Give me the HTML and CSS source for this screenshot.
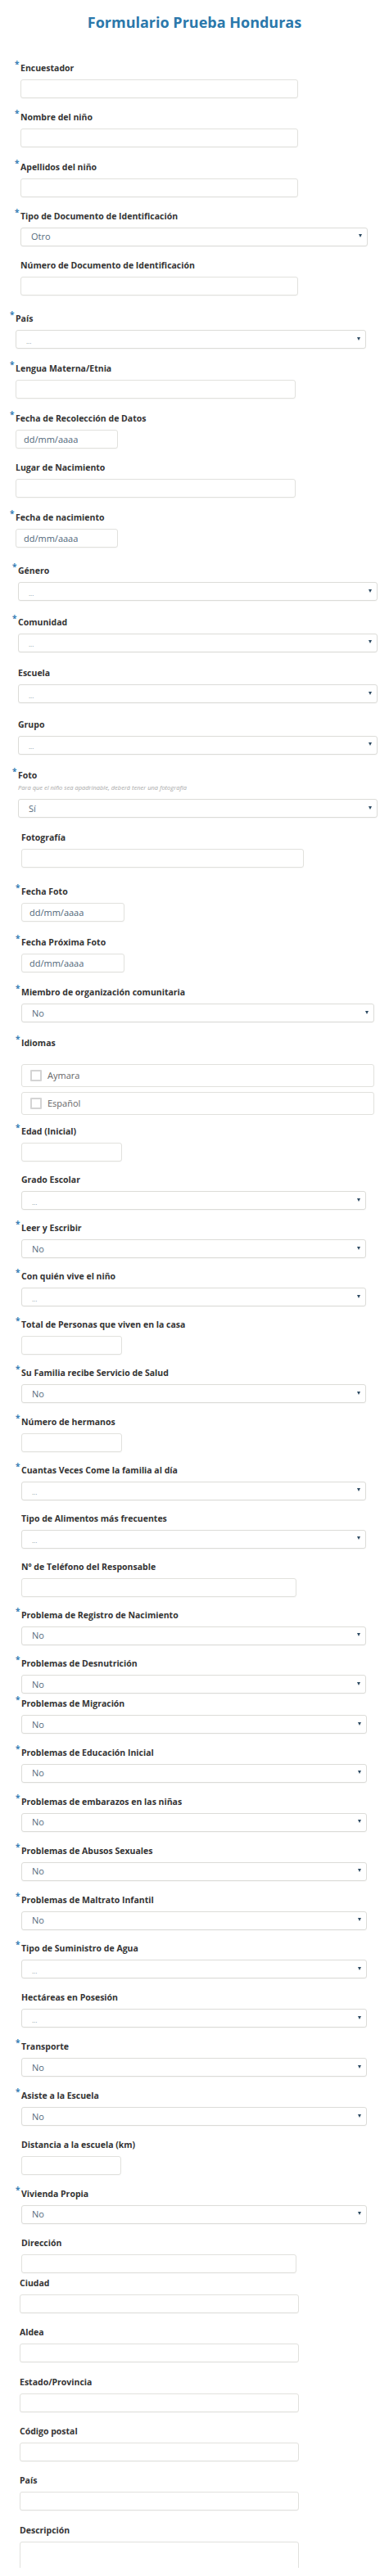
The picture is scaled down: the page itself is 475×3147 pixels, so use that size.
FILE: index.html
```html
<!DOCTYPE html>
<html lang="es">
<head>
<meta charset="utf-8">
<title>Formulario Prueba Honduras</title>
<link rel="stylesheet" href="styles.css">
</head>
<body>
<div class="page">
  <h1 class="title">Formulario Prueba Honduras</h1>

  <section class="sec sec-a">
    <div class="field"><label class="lbl"><span class="req">*</span>Encuestador</label><input class="ctl in" type="text"></div>
    <div class="field"><label class="lbl"><span class="req">*</span>Nombre del niño</label><input class="ctl in" type="text"></div>
    <div class="field"><label class="lbl"><span class="req">*</span>Apellidos del niño</label><input class="ctl in" type="text"></div>
    <div class="field"><label class="lbl"><span class="req">*</span>Tipo de Documento de Identificación</label><div class="ctl sel"><span class="val">Otro</span><span class="arrow"></span></div></div>
    <div class="field"><label class="lbl">Número de Documento de Identificación</label><input class="ctl in" type="text"></div>
  </section>

  <section class="sec sec-b">
    <div class="field"><label class="lbl"><span class="req">*</span>País</label><div class="ctl sel"><span class="dots">...</span><span class="arrow"></span></div></div>
    <div class="field"><label class="lbl"><span class="req">*</span>Lengua Materna/Etnia</label><input class="ctl in" type="text"></div>
    <div class="field"><label class="lbl"><span class="req">*</span>Fecha de Recolección de Datos</label><input class="ctl date" type="text" placeholder="dd/mm/aaaa"></div>
    <div class="field"><label class="lbl">Lugar de Nacimiento</label><input class="ctl in" type="text"></div>
    <div class="field"><label class="lbl"><span class="req">*</span>Fecha de nacimiento</label><input class="ctl date" type="text" placeholder="dd/mm/aaaa"></div>
  </section>

  <section class="sec sec-c">
    <div class="field"><label class="lbl"><span class="req">*</span>Género</label><div class="ctl sel"><span class="dots">...</span><span class="arrow"></span></div></div>
    <div class="field"><label class="lbl"><span class="req">*</span>Comunidad</label><div class="ctl sel"><span class="dots">...</span><span class="arrow"></span></div></div>
    <div class="field"><label class="lbl">Escuela</label><div class="ctl sel"><span class="dots">...</span><span class="arrow"></span></div></div>
    <div class="field"><label class="lbl">Grupo</label><div class="ctl sel"><span class="dots">...</span><span class="arrow"></span></div></div>
    <div class="field"><label class="lbl"><span class="req">*</span>Foto</label><p class="help">Para que el niño sea apadrinable, deberá tener una fotografía</p><div class="ctl sel sel-help"><span class="val">Sí</span><span class="arrow"></span></div></div>
  </section>

  <section class="sec sec-d1">
    <div class="field"><label class="lbl">Fotografía</label><input class="ctl in" type="text"></div>
  </section>

  <section class="sec sec-d2">
    <div class="field"><label class="lbl"><span class="req">*</span>Fecha Foto</label><input class="ctl date" type="text" placeholder="dd/mm/aaaa"></div>
    <div class="field"><label class="lbl"><span class="req">*</span>Fecha Próxima Foto</label><input class="ctl date" type="text" placeholder="dd/mm/aaaa"></div>
    <div class="field"><label class="lbl"><span class="req">*</span>Miembro de organización comunitaria</label><div class="ctl sel"><span class="val">No</span><span class="arrow"></span></div></div>
    <div class="field"><label class="lbl"><span class="req">*</span>Idiomas</label>
      <div class="checks">
        <div class="check-row"><span class="box"></span><span class="check-txt">Aymara</span></div>
        <div class="check-row"><span class="box"></span><span class="check-txt">Español</span></div>
      </div>
    </div>
  </section>

  <section class="sec sec-e">
    <div class="field"><label class="lbl"><span class="req">*</span>Edad (Inicial)</label><input class="ctl sm" type="text"></div>
    <div class="field"><label class="lbl">Grado Escolar</label><div class="ctl sel"><span class="dots">...</span><span class="arrow"></span></div></div>
    <div class="field"><label class="lbl"><span class="req">*</span>Leer y Escribir</label><div class="ctl sel"><span class="val">No</span><span class="arrow"></span></div></div>
    <div class="field"><label class="lbl"><span class="req">*</span>Con quién vive el niño</label><div class="ctl sel"><span class="dots">...</span><span class="arrow"></span></div></div>
    <div class="field"><label class="lbl"><span class="req">*</span>Total de Personas que viven en la casa</label><input class="ctl sm" type="text"></div>
    <div class="field"><label class="lbl"><span class="req">*</span>Su Familia recibe Servicio de Salud</label><div class="ctl sel"><span class="val">No</span><span class="arrow"></span></div></div>
    <div class="field"><label class="lbl"><span class="req">*</span>Número de hermanos</label><input class="ctl sm" type="text"></div>
    <div class="field"><label class="lbl"><span class="req">*</span>Cuantas Veces Come la familia al día</label><div class="ctl sel"><span class="dots">...</span><span class="arrow"></span></div></div>
    <div class="field"><label class="lbl">Tipo de Alimentos más frecuentes</label><div class="ctl sel"><span class="dots">...</span><span class="arrow"></span></div></div>
    <div class="field"><label class="lbl">Nº de Teléfono del Responsable</label><input class="ctl in" type="text"></div>
    <div class="field"><label class="lbl"><span class="req">*</span>Problema de Registro de Nacimiento</label><div class="ctl sel"><span class="val">No</span><span class="arrow"></span></div></div>
    <div class="field"><label class="lbl"><span class="req">*</span>Problemas de Desnutrición</label><div class="ctl sel"><span class="val">No</span><span class="arrow"></span></div></div>
  </section>

  <section class="sec sec-f">
    <div class="field"><label class="lbl"><span class="req">*</span>Problemas de Migración</label><div class="ctl sel"><span class="val">No</span><span class="arrow"></span></div></div>
    <div class="field"><label class="lbl"><span class="req">*</span>Problemas de Educación Inicial</label><div class="ctl sel"><span class="val">No</span><span class="arrow"></span></div></div>
    <div class="field"><label class="lbl"><span class="req">*</span>Problemas de embarazos en las niñas</label><div class="ctl sel"><span class="val">No</span><span class="arrow"></span></div></div>
    <div class="field"><label class="lbl"><span class="req">*</span>Problemas de Abusos Sexuales</label><div class="ctl sel"><span class="val">No</span><span class="arrow"></span></div></div>
    <div class="field"><label class="lbl"><span class="req">*</span>Problemas de Maltrato Infantil</label><div class="ctl sel"><span class="val">No</span><span class="arrow"></span></div></div>
    <div class="field"><label class="lbl"><span class="req">*</span>Tipo de Suministro de Agua</label><div class="ctl sel"><span class="dots">...</span><span class="arrow"></span></div></div>
    <div class="field"><label class="lbl">Hectáreas en Posesión</label><div class="ctl sel"><span class="dots">...</span><span class="arrow"></span></div></div>
    <div class="field"><label class="lbl"><span class="req">*</span>Transporte</label><div class="ctl sel"><span class="val">No</span><span class="arrow"></span></div></div>
    <div class="field"><label class="lbl"><span class="req">*</span>Asiste a la Escuela</label><div class="ctl sel"><span class="val">No</span><span class="arrow"></span></div></div>
    <div class="field"><label class="lbl">Distancia a la escuela (km)</label><input class="ctl sm" type="text"></div>
    <div class="field"><label class="lbl"><span class="req">*</span>Vivienda Propia</label><div class="ctl sel"><span class="val">No</span><span class="arrow"></span></div></div>
    <div class="field"><label class="lbl">Dirección</label><input class="ctl in" type="text"></div>
  </section>

  <section class="sec sec-h">
    <div class="field"><label class="lbl">Ciudad</label><input class="ctl in" type="text"></div>
    <div class="field"><label class="lbl">Aldea</label><input class="ctl in" type="text"></div>
    <div class="field"><label class="lbl">Estado/Provincia</label><input class="ctl in" type="text"></div>
    <div class="field"><label class="lbl">Código postal</label><input class="ctl in" type="text"></div>
    <div class="field"><label class="lbl">País</label><input class="ctl in" type="text"></div>
    <div class="field"><label class="lbl">Descripción</label><textarea class="ctl in area"></textarea></div>
  </section>
</div>
</body>
</html>
```

FILE: styles.css
```css
* { box-sizing: border-box; }

html, body {
  margin: 0;
  padding: 0;
  background: #ffffff;
}

body {
  font-family: "Open Sans", "Noto Sans", "Liberation Sans", sans-serif;
  color: #333333;
}

.page {
  width: 475px;
  height: 3137px;
  overflow: hidden;
  padding-top: 15px;
}

.title {
  margin: 0;
  height: 24px;
  line-height: 24px;
  font-size: 18px;
  font-weight: 700;
  text-align: center;
  color: #2b78ab;
}

.sec {
  --x: 26px;
  --gap: 15px;
  --in-w: 340px;
  --sel-w: 422px;
  --sm-w: 123px;
  --date-w: 126px;
  display: flex;
  flex-direction: column;
  row-gap: var(--gap);
}

.sec-a { margin-top: 36px; --x: 25px; --gap: 15.25px; --in-w: 339px; --sel-w: 424px; }
.sec-b { margin-top: 20px; --x: 19px; --gap: 15.75px; --in-w: 342px; --sel-w: 428px; --date-w: 125px; }
.sec-c { margin-top: 20px; --x: 22px; --gap: 17.5px; --sel-w: 439px; }
.sec-d1 { margin-top: 16px; --x: 26px; --in-w: 345px; }
.sec-d2 { margin-top: 21px; --x: 26px; --gap: 16.5px; --sel-w: 431px; --date-w: 126px; }
.sec-e { margin-top: 12.5px; --x: 26px; --gap: 14.1px; --in-w: 336px; --sel-w: 421px; --sm-w: 123px; }
.sec-f { margin-top: 4px; --x: 26px; --gap: 14.9px; --in-w: 336px; --sel-w: 422px; --sm-w: 122px; }
.sec-h { margin-top: 4px; --x: 24px; --gap: 15.4px; --in-w: 341px; }

.field {
  display: flex;
  flex-direction: column;
  align-items: flex-start;
}

.lbl {
  display: block;
  height: 16px;
  line-height: 16px;
  padding-left: var(--x);
  font-size: 10.5px;
  font-weight: 700;
  color: #343434;
  white-space: nowrap;
}

.req {
  display: inline-block;
  width: 7px;
  margin-left: -7px;
  height: 10px;
  line-height: 10px;
  vertical-align: top;
  font-size: 10px;
  font-weight: 700;
  color: #3a7fb6;
  position: relative;
  top: -2px;
}

.ctl {
  display: block;
  margin: 6px 0 0 var(--x);
  height: 23px;
  border: 1px solid #e1e1dd;
  border-radius: 3px;
  background: #ffffff;
  box-shadow: 0 1px 1px rgba(0, 0, 0, 0.03);
  font-family: "Open Sans", "Noto Sans", "Liberation Sans", sans-serif;
  outline: none;
}

.in { width: var(--in-w); }
.sm { width: var(--sm-w); }

.date {
  width: var(--date-w);
  padding: 0 0 0 9px;
  font-size: 11px;
  color: #4e6577;
}
.date::placeholder { color: #4f6678; opacity: 1; }

.area {
  height: 60px;
  resize: none;
}

.sel {
  width: var(--sel-w);
  display: flex;
  align-items: center;
  justify-content: space-between;
  padding: 0 6px 0 12px;
  border-color: #dcdcd8;
}

.val {
  font-size: 11px;
  color: #566c7d;
  line-height: 14px;
}

.dots {
  font-size: 8px;
  color: #8a97a2;
  line-height: 10px;
  position: relative;
  top: 2px;
}

.arrow {
  width: 0;
  height: 0;
  border-left: 2.5px solid transparent;
  border-right: 2.5px solid transparent;
  border-top: 4px solid #2d4a62;
  margin-top: -2px;
}

.help {
  margin: 1px 0 0 var(--x);
  height: 12px;
  line-height: 12px;
  font-size: 7.5px;
  font-style: italic;
  color: #a9a9a9;
  white-space: nowrap;
}

.sel-help { margin-top: 8px; }

.checks {
  margin: 18px 0 0 var(--x);
  width: var(--sel-w);
  display: flex;
  flex-direction: column;
  row-gap: 6px;
}

.check-row {
  height: 28px;
  border: 1px solid #e1e1dd;
  border-radius: 3px;
  display: flex;
  align-items: center;
  padding-left: 10px;
  column-gap: 7px;
}

.box {
  width: 14px;
  height: 14px;
  border: 2px solid #d4d4d4;
  border-radius: 1px;
  background: #fff;
}

.check-txt {
  font-size: 11px;
  color: #666666;
}
```
